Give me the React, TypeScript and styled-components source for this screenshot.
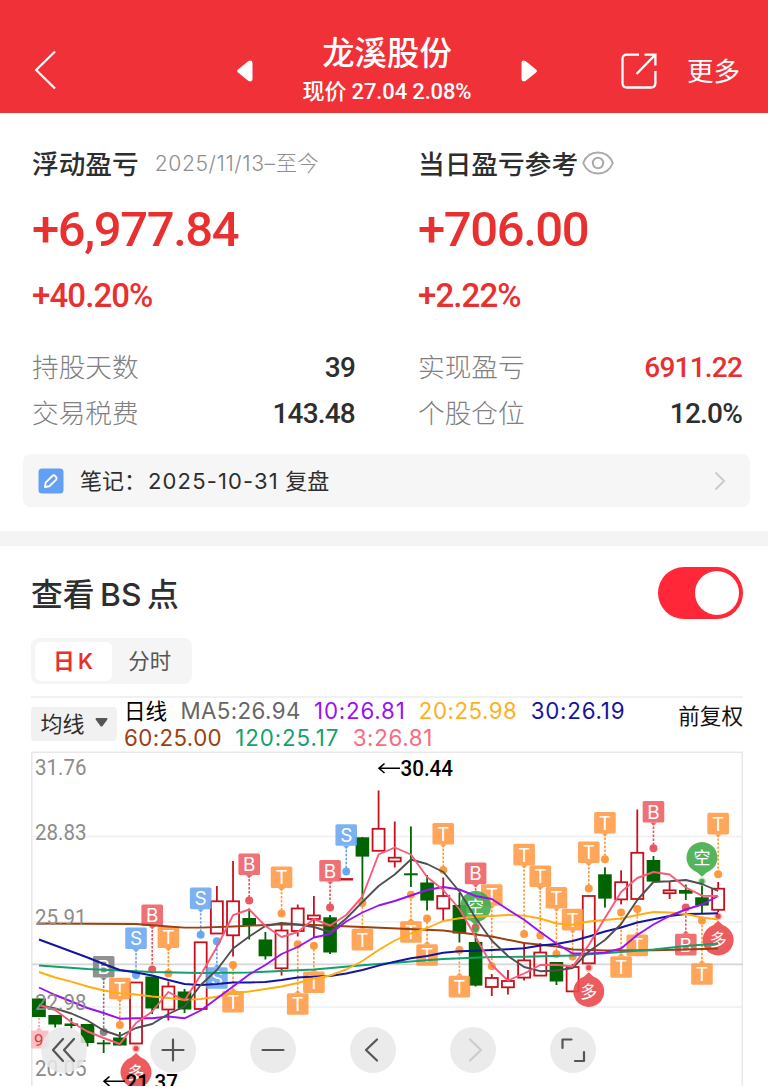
import React from 'react';
import styled, { createGlobalStyle } from 'styled-components';

const CJK = '"Noto Sans CJK SC", sans-serif';

const GlobalStyle = createGlobalStyle`
  * { box-sizing: border-box; }
  body { margin: 0; background: #fff; font-family: Inter, ${CJK}; color: #2e2e2e; }
  button { border: 0; padding: 0; background: none; font: inherit; color: inherit; }
`;

const Page = styled.main`
  width: 768px;
  height: 1087px;
  overflow: hidden;
  background: #fff;
`;

const Header = styled.header`
  height: 113px;
  display: grid;
  grid-template-columns: 237px 16px 268px 16px 84px 36px 1fr;
  align-items: center;
  padding-top: 28px;
  background: #f13138;
  color: #fff;
`;

const BackButton = styled.button`
  display: flex;
  padding: 0 0 1px 34px !important;
`;

const IconButton = styled.button`
  display: flex;
`;

const TitleBlock = styled.div`
  display: flex;
  flex-direction: column;
  align-items: center;
  margin-bottom: 2px;
`;

const StockName = styled.h1`
  margin: 0;
  font: 500 32.4px/42px ${CJK};
`;

const StockPrice = styled.div`
  padding-top: 3px;
  font: 500 22px/34px Roboto, ${CJK};
  letter-spacing: -0.15px;
  white-space: nowrap;
`;

const MoreButton = styled.button`
  padding: 0 0 1px 30px !important;
  text-align: left;
  font: 400 26.5px/36px ${CJK} !important;
`;

const Stats = styled.section`
  display: grid;
  grid-template-columns: 323px 324px;
  column-gap: 63px;
  padding: 25px 0 0 32px;
`;

const StatColumn = styled.div`
  display: flex;
  flex-direction: column;
`;

const StatHeading = styled.div`
  height: 50px;
  padding-bottom: 1px;
  display: flex;
  align-items: center;
  font: 500 26.7px/40px ${CJK};
  white-space: nowrap;
`;

const DateRange = styled.span`
  margin-left: 16px;
  font: 300 21.2px/40px Inter, ${CJK};
  letter-spacing: 0.55px;
  color: #8f8f8f;
`;

const BigAmount = styled.div`
  height: 84px;
  font: 500 49px/84px Roboto, sans-serif;
  letter-spacing: -1.4px;
  color: #e93030;
`;

const Percent = styled.div`
  height: 46px;
  margin-bottom: 26px;
  font: 500 33px/48px Roboto, sans-serif;
  letter-spacing: -0.9px;
  color: #e93030;
`;

const StatRow = styled.div`
  height: 46px;
  display: flex;
  justify-content: space-between;
`;

const StatLabel = styled.span`
  font: 300 26.7px/44px ${CJK};
  color: #808080;
`;

const StatValue = styled.span<{ $up?: boolean }>`
  font: 500 28px/48px Roboto, sans-serif;
  letter-spacing: -0.8px;
  color: ${p => (p.$up ? '#e93030' : '#2e2e2e')};
`;

const Note = styled.div`
  height: 53px;
  margin: 18px 18px 24px 23px;
  padding: 0 24px 0 15px;
  display: flex;
  align-items: center;
  border-radius: 8px;
  background: #f6f6f6;
`;

const NoteText = styled.span`
  flex: 1;
  margin-left: 16px;
  font: 400 22px/34px Inter, ${CJK};
`;

const NoteDate = styled.span`
  margin-left: 2px;
  letter-spacing: 1.15px;
`;

const Separator = styled.div`
  height: 15px;
  background: #f4f4f4;
`;

const SectionHead = styled.div`
  height: 92px;
  padding: 2px 25px 0 31px;
  display: flex;
  align-items: center;
  justify-content: space-between;
`;

const SectionTitle = styled.h2`
  margin: 0;
  padding-top: 3px;
  font: 500 31.8px/44px Inter, ${CJK};
  word-spacing: -3px;
`;

const Toggle = styled.button`
  width: 85px;
  height: 52px;
  padding: 0 4px !important;
  display: flex;
  align-items: center;
  justify-content: flex-end;
  border-radius: 26px;
  background: #ff2738 !important;
`;

const Knob = styled.span`
  width: 44px;
  height: 44px;
  border-radius: 50%;
  background: #fff;
`;

const Tabs = styled.div`
  width: 161px;
  height: 46px;
  margin-left: 31px;
  padding: 4px;
  display: flex;
  border-radius: 8px;
  background: #f5f5f5;
`;

const Tab = styled.button<{ $active?: boolean }>`
  width: 77px;
  height: 39px;
  border-radius: 6px;
  background: ${p => (p.$active ? '#fff' : 'transparent')} !important;
  color: ${p => (p.$active ? '#e93030' : '#555')} !important;
  font: ${p => (p.$active ? 600 : 400)} 21.4px/37px Inter, ${CJK} !important;
  word-spacing: -2px;
`;

const Legend = styled.div`
  height: 55px;
  margin: 12px 25px 0 31px;
  display: flex;
  border-top: 2px solid #f1f1f1;
`;

const AverageSelect = styled.button`
  width: 86px;
  height: 34px;
  margin-top: 9px;
  padding-bottom: 3px !important;
  display: flex;
  align-items: center;
  justify-content: center;
  gap: 10px;
  border-radius: 4px;
  background: #f1f1f1 !important;
  font: 400 22px/31px ${CJK} !important;
`;

const LegendLines = styled.div`
  flex: 1;
  margin: -1px 0 0 7px;
`;

const LegendLine = styled.div`
  height: 27px;
  display: flex;
  align-items: center;
  gap: 13.3px;
  white-space: nowrap;
`;

const Period = styled.span`
  padding-bottom: 1px;
  font: 400 21.6px/26px ${CJK};
  color: #000;
`;

const Average = styled.span<{ $color: string; $tracking: number }>`
  font: 400 22.3px/26px Inter, sans-serif;
  letter-spacing: ${p => p.$tracking}px;
  color: ${p => p.$color};
`;

const Adjust = styled.span`
  margin-top: 1px;
  font: 400 21.6px/31px ${CJK};
  color: #111;
`;

const ChartArea = styled.div`
  position: relative;
  height: 335px;
  margin: 0 25px 0 31px;
  overflow: hidden;
`;

const ChartControls = styled.div`
  position: absolute;
  left: 9.5px;
  top: 276px;
  display: flex;
  gap: 54px;
`;

const Control = styled.button<{ $first?: boolean }>`
  width: 46px;
  height: 46px;
  margin-right: ${p => (p.$first ? '9px' : '0')};
  display: flex;
  align-items: center;
  justify-content: center;
  border-radius: 50%;
  background: rgba(232, 232, 232, 0.86) !important;
`;

const RED = '#c8101c';
const GREEN = '#006400';
const cx = (i: number) => 39 + i * 16.17;

// [up, body top, body bottom, high, low]
const candles: [number, number, number, number, number][] = [
  [0, 998.5, 1017, 998.5, 1017], [0, 1015, 1024.5, 1015, 1027.5], [0, 1023.5, 1026, 1018, 1028.5],
  [0, 1024, 1043, 1024, 1046.5], [0, 1042.5, 1044.3, 1040, 1053], [0, 1037.5, 1045.5, 1032, 1045.5],
  [1, 982.5, 1043.5, 982.5, 1043], [0, 976.5, 1008.5, 976.5, 1014], [1, 986.5, 1009.5, 981.5, 1020.5],
  [0, 991.5, 1009.5, 989, 1013], [1, 942.3, 1009, 942.5, 1010], [1, 901.3, 933.5, 886, 933],
  [1, 901.3, 935.3, 861, 956.5], [0, 918, 925, 908.5, 939.5], [0, 939.5, 956.3, 932, 959.5],
  [1, 930.5, 968.3, 922, 975.5], [1, 908.5, 931, 904.5, 936.5], [1, 915.5, 919, 896, 937.5],
  [0, 917.3, 952.5, 915, 954], [1, 879, 879.6, 879, 879.5], [0, 837.3, 856.6, 837, 903],
  [1, 828.8, 850.8, 790.5, 850], [1, 857.7, 861.4, 821.5, 867.5], [0, 873.3, 875.3, 826.5, 887],
  [0, 882.5, 900.6, 875, 910.5], [1, 896, 908.5, 877.5, 921.5], [0, 905, 933.5, 893, 942.5],
  [0, 942, 985.6, 933, 986.5], [1, 978, 987, 974, 996], [1, 981, 987.3, 970, 994.5],
  [1, 960.4, 977.6, 942, 980.5], [1, 952.5, 975.6, 943, 976], [0, 962, 981.5, 962, 985],
  [1, 967, 991.4, 964, 991], [1, 896, 963.3, 896, 963], [0, 874.3, 898.6, 867.3, 907.6],
  [1, 882.2, 899.4, 870.3, 904.4], [1, 852.8, 899, 809.5, 899], [0, 860, 881.6, 856, 881.6],
  [1, 890.3, 893.2, 881, 899], [0, 890, 893.7, 884.5, 900], [0, 897.3, 905.6, 885.5, 913],
  [1, 888.7, 909.8, 882, 912],
];

type Series = { color: string; points: [number, number][] };
const dense = (values: number[]): [number, number][] => values.map((v, i) => [i, v]);

const series: Series[] = [
  { color: '#9a4013', points: [[0, 923.5], [6, 924], [8, 926.5], [9, 927.6], [10, 927.6], [12, 926.5], [15, 924.2], [17, 925], [20, 927], [25, 930.5], [28, 936.5], [30, 943], [32, 946.5], [33, 949.5], [35, 950.5], [38, 950.2], [40, 949.5], [42, 948.5]] },
  { color: '#14a06c', points: [[0, 965.5], [3, 969], [5, 970.5], [7, 972], [10, 973], [13, 972.5], [17, 969.5], [20, 965.2], [25, 959], [28, 957], [30, 956.7], [33, 955.5], [36, 952], [38, 949.5], [40, 946], [42, 943.5]] },
  { color: '#1414a0', points: dense([939.5, 945.5, 951.5, 957.5, 964, 970, 972.5, 975.5, 980, 984, 985, 984, 982.5, 982.5, 982, 980, 977.5, 976.5, 976, 973.5, 970, 965.7, 961.7, 958.3, 956, 952.8, 951.3, 950.7, 950, 949.3, 948.3, 945.5, 944, 941, 936.5, 931.5, 927.5, 922.5, 919.2, 916, 914, 913.7, 913.3]) },
  { color: '#ffae12', points: dense([972, 977.5, 981.7, 986.5, 990.5, 993.3, 994.5, 996.5, 998, 999.7, 999, 996.7, 993.3, 991.5, 989, 986.5, 983, 978.5, 975.5, 969.5, 961, 950, 940.5, 933.5, 928, 921, 918.3, 916.7, 916, 915, 915.6, 918.5, 923.5, 924.7, 921.5, 920, 918.5, 915, 912, 912.5, 914, 917.5, 919.5]) },
  { color: '#9713f5', points: dense([987.5, 995, 1001.5, 1008, 1013, 1018.7, 1018.3, 1018.3, 1016.5, 1018.3, 1010.5, 998.5, 986.5, 974.5, 965, 954, 947, 937.5, 934, 921.5, 912.5, 905.5, 901, 895.5, 890, 887, 889.5, 896, 899, 909.5, 919.8, 932, 943.5, 953.5, 953.5, 952.7, 948.5, 935, 924.5, 916, 909.5, 904.5, 896]) },
  { color: '#505050', points: dense([1005, 1008.5, 1013.5, 1020.5, 1030.5, 1036, 1028, 1024, 1014, 1006.5, 985, 970, 948.5, 936.5, 926, 923, 924.5, 927, 932, 918.5, 902, 886, 874.5, 859.5, 864, 872, 891.5, 918, 940.5, 956, 967, 971.2, 970.5, 968, 951.5, 940, 924, 900, 882, 881.3, 880, 884, 891]) },
  { color: '#fa5a78', points: dense([1005, 1010, 1022, 1031.5, 1038, 1044, 1023, 1011.5, 992, 1000.5, 975, 947, 915.2, 909.5, 926, 937, 932, 919, 925.5, 915, 896.5, 854.5, 847.5, 854.5, 877, 890, 909, 937, 965, 980.5, 973.5, 965, 964.7, 966.5, 945, 918, 892, 878, 872, 874.5, 887.5, 895.7, 896]) },
];

type Kind = 'B' | 'S' | 'T' | 'G';
const kindColor: Record<Kind, [string, string]> = {
  B: ['#ee5a5f', '#e85058'],
  S: ['#67a6f0', '#62a3ec'],
  T: ['#ff9840', '#ff9536'],
  G: ['#7e7e7e', '#7e7e7e'],
};

// [kind, candle index, label centre y, dot y]
const markers: [Kind, number, number, number][] = [
  ['G', 4, 966.8, 1032], ['T', 5, 988.5, 1025], ['S', 6, 938.2, 975], ['B', 7, 915.2, 969.5],
  ['T', 8, 937.3, 973.5], ['S', 10, 898.4, 934.7], ['S', 11, 978, 941.3], ['T', 12, 1001.7, 965],
  ['B', 13, 864.2, 900.5], ['T', 15, 877.2, 913.5], ['T', 16, 1004, 944.3], ['T', 17, 982.3, 945.8],
  ['B', 18, 870.8, 907.5], ['S', 19, 835, 871.5], ['T', 20, 939.6, 903], ['T', 23, 932, 894.8],
  ['T', 24, 955, 918.5], ['T', 25, 833.8, 870], ['T', 26, 986.6, 950], ['B', 27, 873.4, 927.5],
  ['T', 28, 895, 966.3], ['T', 30, 854.6, 934], ['T', 31, 876.2, 935.5], ['T', 32, 897.8, 954],
  ['T', 33, 919.6, 956.5], ['T', 34, 852.3, 888.6], ['T', 35, 822.8, 859.2], ['T', 36, 967, 912.5],
  ['T', 37, 945.4, 909], ['B', 38, 811.8, 848.2], ['B', 40, 944.6, 907.5], ['T', 41, 974, 920.5],
  ['T', 42, 823.6, 874.2],
];

// [character, candle index, bubble centre y, dot y, colour]
const pins: [string, number, number, number, string][] = [
  ['空', 27, 906.3, 930, '#43ad4a'],
  ['空', 41, 857.5, 881.4, '#43ad4a'],
  ['多', 34, 991.5, 967.7, '#ea4a4e'],
  ['多', 42, 940, 916.3, '#ea4a4e'],
  ['多', 6, 1072.3, 1048.5, '#ea4a4e'],
];

const Candle = ({ i }: { i: number }) => {
  const [up, top, bottom, high, low] = candles[i];
  const x = cx(i);
  const left = i === 0 ? 32 : x - 6.8;
  if (!up) {
    return (
      <g fill={GREEN}>
        <rect x={left} y={top} width={x + 6.8 - left} height={bottom - top} />
        <rect x={x - 0.9} y={high} width={1.8} height={low - high} />
      </g>
    );
  }
  return (
    <g stroke={RED} strokeWidth={1.8} fill="none">
      {high < top && <path d={`M${x} ${high}V${top}`} />}
      {low > bottom && <path d={`M${x} ${bottom}V${low}`} />}
      <rect x={x - 6} y={top} width={12} height={bottom - top} />
    </g>
  );
};

const Marker = ({ kind, i, y, dot }: { kind: Kind; i: number; y: number; dot: number }) => {
  const x = cx(i);
  const dir = dot > y ? 1 : -1;
  const [fill, accent] = kindColor[kind];
  const edge = y + dir * 10.8;
  return (
    <g>
      <path d={`M${x} ${edge}V${dot}`} stroke={accent} strokeWidth={1.6} strokeDasharray="2.4 1.6" />
      <circle cx={x} cy={dot} r={4} fill={accent} opacity={0.95} />
      <g opacity={0.86}>
        <rect x={x - 10.8} y={y - 10.8} width={21.6} height={21.6} rx={1.6} fill={fill} />
        <path d={`M${x - 3.5} ${edge}L${x} ${edge + dir * 3.2}L${x + 3.5} ${edge}Z`} fill={fill} />
      </g>
      <text x={x} y={y + 7} textAnchor="middle" fontFamily="Inter, sans-serif" fontSize={19} fill="#fff">
        {kind === 'G' ? 'B' : kind}
      </text>
    </g>
  );
};

const Pin = ({ char, i, y, dot, color }: { char: string; i: number; y: number; dot: number; color: string }) => {
  const x = cx(i);
  const dir = dot > y ? 1 : -1;
  return (
    <g>
      <circle cx={x} cy={dot} r={4.2} fill={color} opacity={0.3} />
      <circle cx={x} cy={dot} r={2.6} fill={color} />
      <g opacity={0.9} fill={color}>
        <path d={`M${x - 5} ${y + dir * 14.7}L${x} ${y + dir * 19.2}L${x + 5} ${y + dir * 14.7}A15.5 15.5 0 1 ${dir > 0 ? 0 : 1} ${x - 5} ${y + dir * 14.7}Z`} />
      </g>
      <text x={x} y={y + 6.2} textAnchor="middle" fontFamily={'"Noto Sans CJK SC", sans-serif'} fontSize={17} fill="#fff">
        {char}
      </text>
    </g>
  );
};

const axis: [string, number][] = [['31.76', 774.5], ['28.83', 839.5], ['25.91', 924.7], ['22.98', 1010], ['20.05', 1076]];

const Chart = () => (
  <svg width={712} height={335} viewBox="31 751 712 335" style={{ display: 'block' }}>
    <g stroke="#f0f0f0" strokeWidth={1.6} fill="none">
      <path d="M31 836.5H742M31 922H742M31 1007H742" />
      <path d="M31.8 1086V752.3H742.3V1086" stroke="#e9e9e9" />
    </g>
    <path d="M32 964.4H743" stroke="#d6d6d6" strokeWidth={1.6} />
    {candles.map((_, i) => <Candle key={i} i={i} />)}
    <path d="M39 1018V1030" stroke="#ee8a8e" strokeWidth={1.4} strokeDasharray="2 1.5" />
    <path d="M31 1030.5H36L39 1027L42 1030.5H48.5V1048.5H31Z" fill="#fbb9bc" opacity={0.9} />
    <text x={34} y={1046} fontFamily="Roboto, sans-serif" fontSize={17} fill="#e03a40">9</text>
    {markers.map(([kind, i, y, dot]) => <Marker key={`${kind}${i}`} kind={kind} i={i} y={y} dot={dot} />)}
    {pins.map(([char, i, y, dot, color]) => <Pin key={i} char={char} i={i} y={y} dot={dot} color={color} />)}
    {series.map(s => (
      <polyline
        key={s.color}
        points={s.points.map(([i, y]) => `${cx(i)},${y}`).join(' ')}
        fill="none"
        stroke={s.color}
        strokeWidth={1.9}
        strokeLinejoin="round"
      />
    ))}
    {axis.map(([label, y]) => (
      <text key={label} x={35} y={y} textLength={51.5} lengthAdjust="spacingAndGlyphs" fontFamily="Roboto, sans-serif" fontSize={21.5} fill="#8c8c8c">
        {label}
      </text>
    ))}
    <g fontFamily="Roboto, sans-serif" fontSize={21.5} fontWeight={500} fill="#000">
      <text x={400.5} y={776} textLength={52.5} lengthAdjust="spacingAndGlyphs">30.44</text>
      <text x={125.5} y={1089.5} textLength={52.5} lengthAdjust="spacingAndGlyphs">21.37</text>
    </g>
    <g stroke="#000" strokeWidth={1.6} fill="none">
      <path d="M400 768.3H379M384.5 763.5L379 768.3L384.5 773" />
      <path d="M125 1081.3H104M109.5 1076.5L104 1081.3L109.5 1086" />
    </g>
  </svg>
);

const Glyph = ({ d, color = '#555' }: { d: string; color?: string }) => (
  <svg width={46} height={46} viewBox="0 0 46 46" fill="none" stroke={color} strokeWidth={2.2} strokeLinecap="round" strokeLinejoin="round">
    <path d={d} />
  </svg>
);

export default function App() {
  return (
    <Page>
      <GlobalStyle />
      <Header>
        <BackButton aria-label="返回">
          <svg width={24} height={40} viewBox="0 0 24 40" fill="none" stroke="#fff" strokeWidth={2.2}>
            <path d="M21 1.5L2.2 20L21 38.5" />
          </svg>
        </BackButton>
        <IconButton aria-label="上一只">
          <svg width={16} height={22} viewBox="0 0 16 22" fill="#fff">
            <path d="M1 9.4L11.5 1Q15.3-.6 15.5 3V19Q15.3 22.6 11.5 21L1 12.6Q-.8 11 1 9.4Z" />
          </svg>
        </IconButton>
        <TitleBlock>
          <StockName>龙溪股份</StockName>
          <StockPrice>现价 27.04 2.08%</StockPrice>
        </TitleBlock>
        <IconButton aria-label="下一只">
          <svg width={16} height={22} viewBox="0 0 16 22" fill="#fff">
            <path d="M15 9.4L4.5 1Q.7-.6.5 3V19Q.7 22.6 4.5 21L15 12.6Q16.8 11 15 9.4Z" />
          </svg>
        </IconButton>
        <span />
        <IconButton aria-label="分享">
          <svg width={36} height={36} viewBox="0 0 36 36" fill="none" stroke="#fff" strokeWidth={2.3}>
            <path d="M18 1.6H6Q1.5 1.6 1.5 6V30Q1.5 34.5 6 34.5H30Q34.4 34.5 34.4 30V18" />
            <path d="M23.5 1.6H34.4V12.5M34.4 1.6L15.5 21" />
          </svg>
        </IconButton>
        <MoreButton>更多</MoreButton>
      </Header>

      <Stats>
        <StatColumn>
          <StatHeading>浮动盈亏<DateRange>2025/11/13–至今</DateRange></StatHeading>
          <BigAmount>+6,977.84</BigAmount>
          <Percent>+40.20%</Percent>
          <StatRow><StatLabel>持股天数</StatLabel><StatValue>39</StatValue></StatRow>
          <StatRow><StatLabel>交易税费</StatLabel><StatValue>143.48</StatValue></StatRow>
        </StatColumn>
        <StatColumn>
          <StatHeading>
            当日盈亏参考
            <svg width={32} height={24} viewBox="0 0 32 24" fill="none" stroke="#aaa" strokeWidth={2} style={{ marginLeft: 4 }}>
              <path d="M1.2 12C4 5 9.4 1.6 16 1.6S28 5 30.8 12C28 19 22.6 22.4 16 22.4S4 19 1.2 12Z" />
              <circle cx={16} cy={12} r={5.2} />
            </svg>
          </StatHeading>
          <BigAmount>+706.00</BigAmount>
          <Percent>+2.22%</Percent>
          <StatRow><StatLabel>实现盈亏</StatLabel><StatValue $up>6911.22</StatValue></StatRow>
          <StatRow><StatLabel>个股仓位</StatLabel><StatValue>12.0%</StatValue></StatRow>
        </StatColumn>
      </Stats>

      <Note>
        <svg width={26} height={26} viewBox="0 0 26 26" fill="none">
          <rect x={0.5} y={0.5} width={25} height={25} rx={3.5} fill="#639ff3" />
          <path d="M7 19L7.6 14.6L14.6 7.8Q15.8 6.8 17.1 8L18.2 9.2Q19.2 10.4 18.2 11.6L11.3 18.3Z" stroke="#fff" strokeWidth={1.9} strokeLinejoin="round" />
        </svg>
        <NoteText>笔记：<NoteDate>2025-10-31</NoteDate> 复盘</NoteText>
        <svg width={12} height={20} viewBox="0 0 12 20" fill="none" stroke="#ccc" strokeWidth={2.1}>
          <path d="M1.5 1.5L10 10L1.5 18.5" />
        </svg>
      </Note>
      <Separator />

      <SectionHead>
        <SectionTitle>查看 BS 点</SectionTitle>
        <Toggle role="switch" aria-checked="true"><Knob /></Toggle>
      </SectionHead>
      <Tabs>
        <Tab $active>日 K</Tab>
        <Tab>分时</Tab>
      </Tabs>

      <Legend>
        <AverageSelect>
          均线
          <svg width={13} height={9} viewBox="0 0 13 9" fill="#555"><path d="M1.5 0H11.5Q13.2.2 12 2L7.6 8Q6.5 9.2 5.4 8L1 2Q-.2.2 1.5 0Z" /></svg>
        </AverageSelect>
        <LegendLines>
          <LegendLine>
            <Period>日线</Period>
            <Average $color="#666" $tracking={0.4}>MA5:26.94</Average>
            <Average $color="#9713f5" $tracking={0.8}>10:26.81</Average>
            <Average $color="#ffb01c" $tracking={0.5}>20:25.98</Average>
            <Average $color="#1414a0" $tracking={0.8}>30:26.19</Average>
          </LegendLine>
          <LegendLine>
            <Average $color="#9a4013" $tracking={0.4}>60:25.00</Average>
            <Average $color="#14a06c" $tracking={0.9}>120:25.17</Average>
            <Average $color="#fa6a80" $tracking={0.65}>3:26.81</Average>
          </LegendLine>
        </LegendLines>
        <Adjust>前复权</Adjust>
      </Legend>

      <ChartArea>
        <Chart />
        <ChartControls>
          <Control $first><Glyph d="M22 12L12 23L22 34M33 12L23 23L33 34" /></Control>
          <Control><Glyph d="M23 12.5V33.5M12.5 23H33.5" /></Control>
          <Control><Glyph d="M12.5 23H33.5" /></Control>
          <Control><Glyph d="M27 12.5L16 23L27 33.5" /></Control>
          <Control><Glyph color="#ccc" d="M20 12.5L31 23L20 33.5" /></Control>
          <Control><Glyph d="M12.5 21V12.5H21.5M25 34H34V25" /></Control>
        </ChartControls>
      </ChartArea>
    </Page>
  );
}
